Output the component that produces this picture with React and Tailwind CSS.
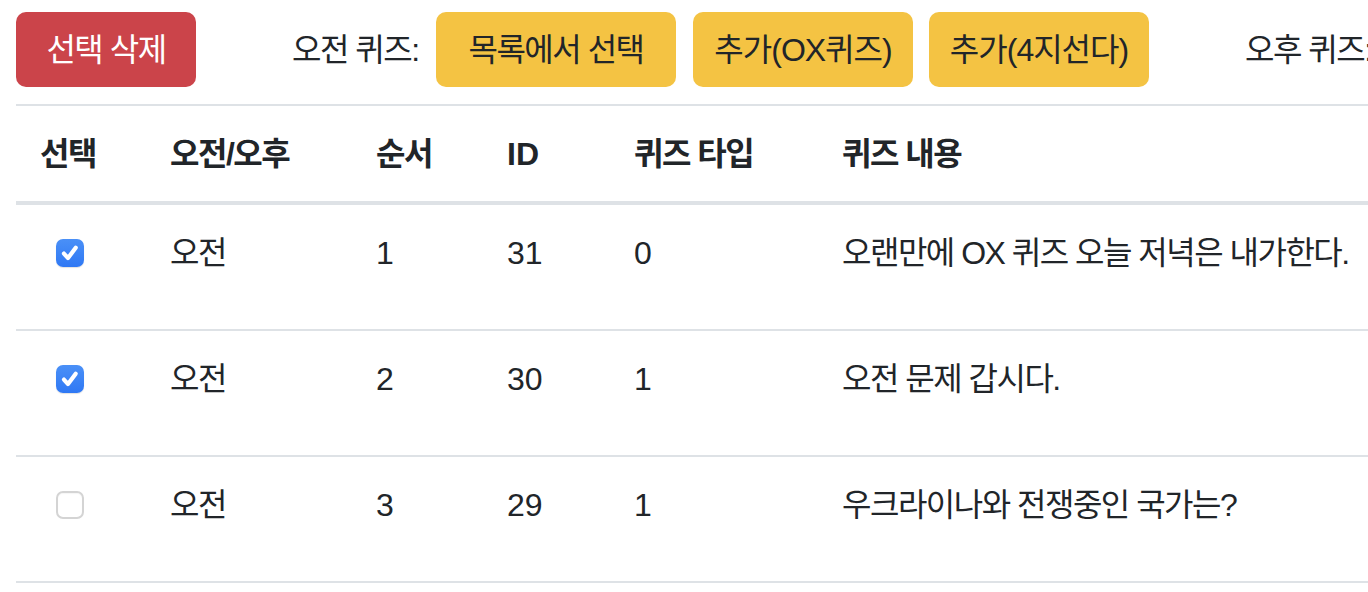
import React from "react";

const KO = { fontFamily: '"Liberation Sans", "Noto Sans CJK KR", sans-serif' };

function Check({ checked }) {
  if (checked) {
    return (
      <div className="w-[28px] h-[28px] rounded-[7px] bg-gradient-to-b from-[#4a90f7] to-[#2f78f4] flex items-center justify-center shadow-[0_1px_1px_rgba(0,0,0,0.12)]">
        <svg width="22" height="22" viewBox="0 0 20 20" fill="none">
          <path d="M4.5 10.5 L8.2 14.6 L15.2 5.2" stroke="white" strokeWidth="3.8" strokeLinecap="round" strokeLinejoin="round" />
        </svg>
      </div>
    );
  }
  return (
    <div className="w-[28px] h-[28px] rounded-[7px] bg-white border-2 border-[#d4d4d4] shadow-[inset_0_1px_1px_rgba(0,0,0,0.04)]" />
  );
}

const rows = [
  { checked: true, ampm: "오전", order: "1", id: "31", type: "0", content: "오랜만에 OX 퀴즈 오늘 저녁은 내가한다." },
  { checked: true, ampm: "오전", order: "2", id: "30", type: "1", content: "오전 문제 갑시다." },
  { checked: false, ampm: "오전", order: "3", id: "29", type: "1", content: "우크라이나와 전쟁중인 국가는?" },
];

export default function App() {
  return (
    <div className="w-[1368px] h-[592px] overflow-hidden bg-white text-[#212529] text-[32px] leading-[48px]" style={KO}>
      <div className="flex items-center pl-[16px] pt-[12px] whitespace-nowrap">
        <div className="w-[180px] h-[75px] shrink-0 rounded-[10px] bg-[#cb444a] text-white flex items-center justify-center tracking-[-1.5px]">
          선택 삭제
        </div>
        <div className="ml-[96px] w-[126px] shrink-0 tracking-[-1.5px]">오전 퀴즈:</div>
        <div className="ml-[18px] w-[240px] h-[75px] shrink-0 rounded-[10px] bg-[#f4c343] flex items-center justify-center tracking-[-1.5px]">
          목록에서 선택
        </div>
        <div className="ml-[17px] w-[220px] h-[75px] shrink-0 rounded-[10px] bg-[#f4c343] flex items-center justify-center tracking-[-1px]">
          추가(OX퀴즈)
        </div>
        <div className="ml-[16px] w-[220px] h-[75px] shrink-0 rounded-[10px] bg-[#f4c343] flex items-center justify-center tracking-[-1px]">
          추가(4지선다)
        </div>
        <div className="ml-[96px] shrink-0 tracking-[-1.5px]">오후 퀴즈:</div>
      </div>

      <div className="ml-[16px] mt-[17px] w-[1400px] border-t-2 border-[#dee2e6]">
        <div className="flex border-b-4 border-[#dee2e6] font-bold pt-[24px] pb-[23px] whitespace-nowrap">
          <div className="w-[130px] pl-[24px] tracking-[-1.5px]">선택</div>
          <div className="w-[206px] pl-[24px] tracking-[-1.5px]">오전/오후</div>
          <div className="w-[131px] pl-[24px] tracking-[-1.5px]">순서</div>
          <div className="w-[127px] pl-[24px]">ID</div>
          <div className="w-[208px] pl-[24px] tracking-[-1.5px]">퀴즈 타입</div>
          <div className="flex-1 pl-[24px] tracking-[-1.5px]">퀴즈 내용</div>
        </div>
        {rows.map((r, i) => (
          <div key={i} className="flex border-b-2 border-[#dee2e6] pt-[24px] pb-[52px] whitespace-nowrap">
            <div className="w-[130px] pl-[40px] h-[48px] flex items-center">
              <Check checked={r.checked} />
            </div>
            <div className="w-[206px] pl-[24px] tracking-[-1.5px]">{r.ampm}</div>
            <div className="w-[131px] pl-[24px]">{r.order}</div>
            <div className="w-[127px] pl-[24px]">{r.id}</div>
            <div className="w-[208px] pl-[24px]">{r.type}</div>
            <div className="flex-1 pl-[24px] tracking-[-1.5px]">{r.content}</div>
          </div>
        ))}
      </div>
    </div>
  );
}
